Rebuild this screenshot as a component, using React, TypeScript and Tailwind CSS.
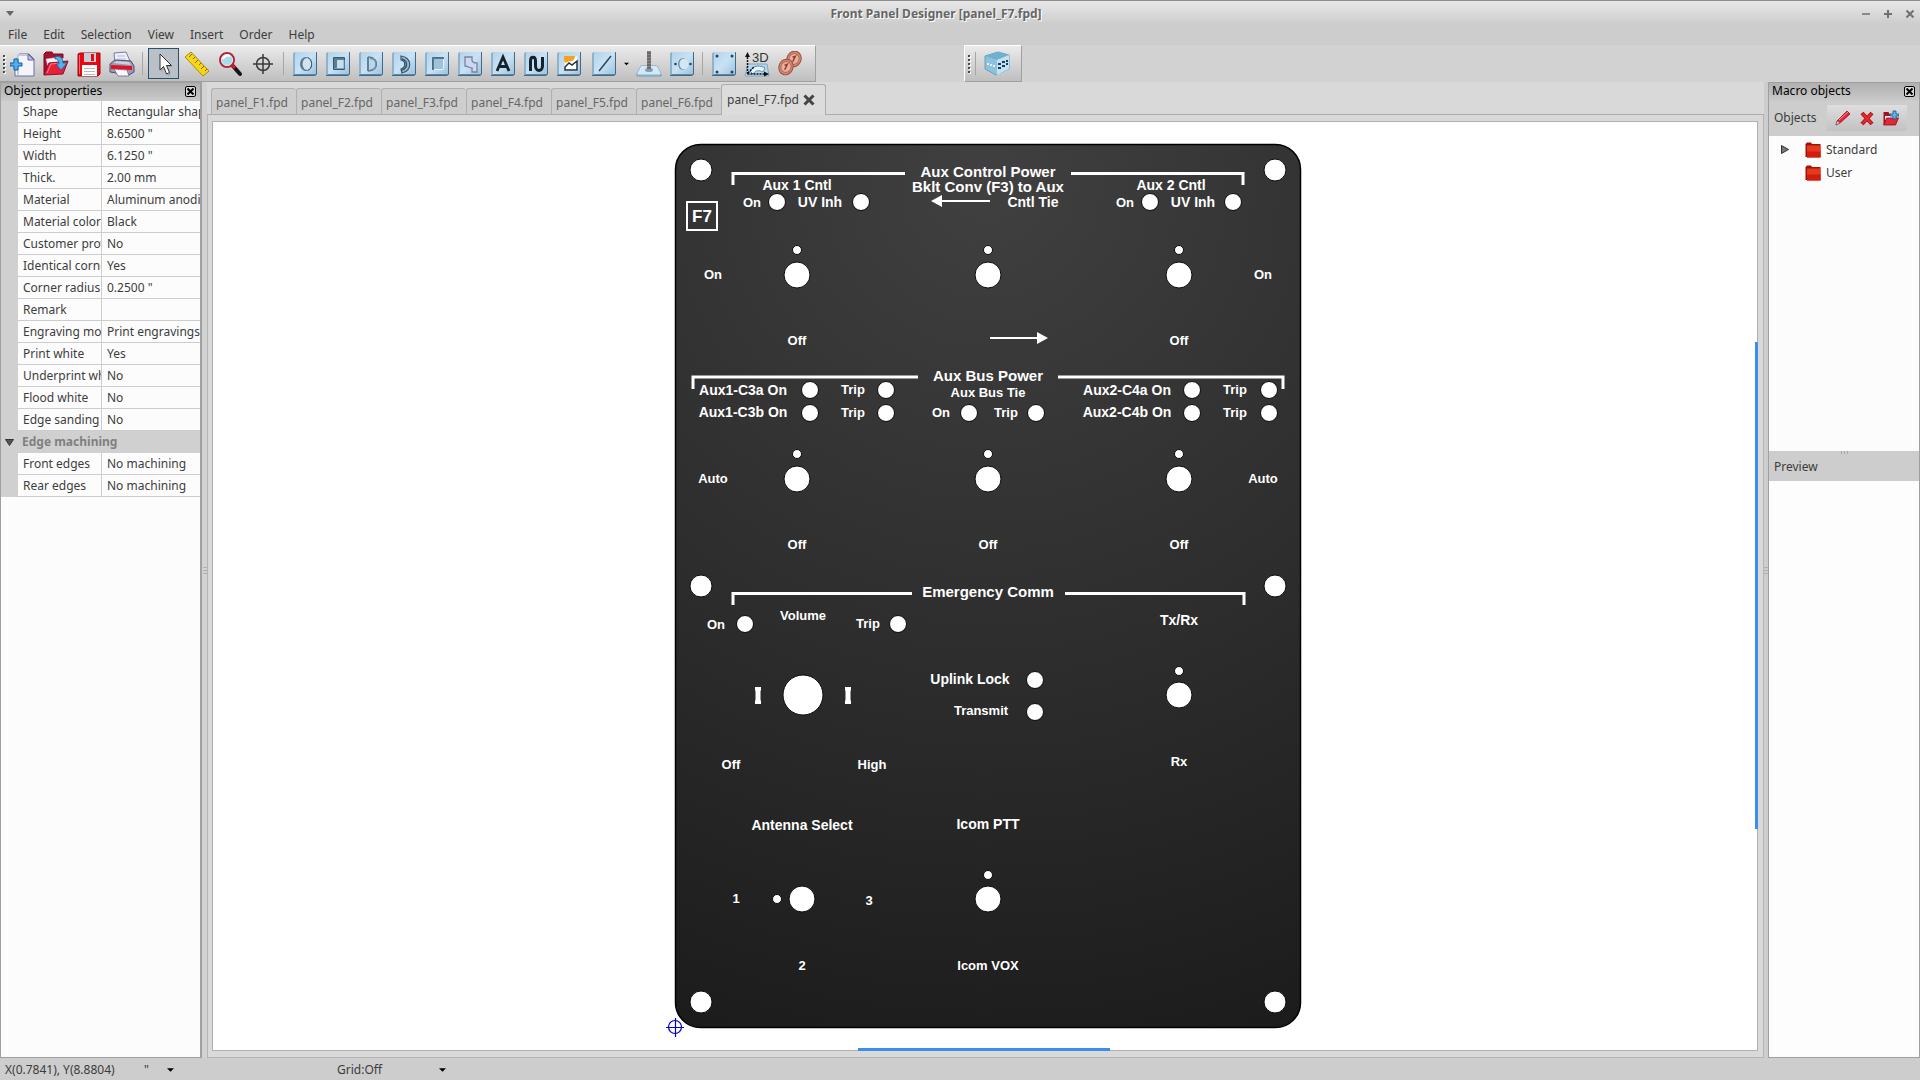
import type { ReactNode } from "react";

type Pt = [number, number];

/* ---------- toolbar icons ---------- */

const Ico = ({ children }: { children: ReactNode }) => (
  <svg viewBox="0 0 26 26" className="size-[26px] shrink-0" aria-hidden="true">
    {children}
  </svg>
);

const Plate = ({ children }: { children?: ReactNode }) => (
  <Ico>
    <defs>
      <linearGradient id="plate" x1="0" y1="0" x2="1" y2="1">
        <stop offset="0" stopColor="#b4d2e8" />
        <stop offset="0.5" stopColor="#c9e2f5" />
        <stop offset="1" stopColor="#9dc3de" />
      </linearGradient>
    </defs>
    <path d="M3 1h22v22l-2 2H1V3z" fill="#5f87a3" />
    <path d="M3 1h21v22H3z" fill="url(#plate)" />
    <path d="M1 3l2-2v22l-2 2z" fill="#8db2cc" />
    <path d="M1 24.5h22l1.500-1.500V1.500" fill="none" stroke="#3f6a88" />
    {children}
  </Ico>
);

const NewIcon = () => (
  <Ico>
    <path d="M9 3h10l5 5v17H5V12z" fill="#f4f5fc" stroke="#6c6ca0" />
    <path d="M8 24V4h10" fill="none" stroke="#c5c8e2" strokeWidth="2" />
    <path d="M18 3v6h6z" fill="#b9bce0" stroke="#6c6ca0" />
    <path d="M4 8h4v4h4v3H8v4H4v-4H0v-3h4z" fill="#49b2f2" stroke="#1b5c95" />
  </Ico>
);
const OpenIcon = () => (
  <Ico>
    <path d="M1 24V3l2-2h6l1 2h10v4" fill="#a90f2e" stroke="#7a0a20" />
    <path d="M3 8l14-2 3 5-14 9z" fill="#f3f3f7" stroke="#b7b7c6" strokeWidth="0.600" />
    <path d="M1 24L6 12l19-2-5 13z" fill="#e8203a" stroke="#8e0f22" />
    <path d="M4 22l4-9 10-1" fill="none" stroke="#ff8090" />
    <path d="M12 6c5-2 8 1 8 6h4l-6 7-5-6h3c0-3-1-5-4-5z" fill="#4db4f0" stroke="#1c5d91" strokeWidth="0.800" />
  </Ico>
);
const SaveIcon = () => (
  <Ico>
    <path d="M2 3l2-1h20v21l-2 2H2z" fill="#e50914" stroke="#a10810" />
    <path d="M8 2h12v9H8z" fill="#c9ced6" />
    <path d="M15 3h3v7h-3z" fill="#e50914" />
    <path d="M6 14h15v11H6z" fill="#fff" />
    <path d="M8 17.500h11M8 20.500h11M8 23.500h11" stroke="#b5b5bd" />
    <path d="M3.500 4v19" stroke="#ff6a70" />
  </Ico>
);
const PrintIcon = () => (
  <Ico>
    <path d="M6 12L5 2l12-1 4 9z" fill="#eef0fb" stroke="#7a7a9c" />
    <path d="M8 5h8M8 8h9" stroke="#b6b9d8" />
    <path d="M1 13l5-4 16 1 3 5v6l-5 3-19-3z" fill="#9a9ab8" stroke="#4d4d6c" />
    <path d="M2 14l21 1v4l-21-1z" fill="#e2121f" />
    <path d="M4 12l4-2 12 1 2 3z" fill="#cfd0e4" />
    <path d="M5 18l13 1 2 6H9z" fill="#f7f7fc" stroke="#6b6b8d" strokeWidth="0.800" />
  </Ico>
);
const CursorIcon = () => (
  <Ico>
    <path d="M10 4v17l4-4 3 8 3-1-3-8h5z" fill="#8b9199" opacity="0.500" />
    <path d="M9 3v16l3.500-3.500 3 7.500 3-1.500-3-7h5z" fill="#fff" stroke="#333" />
  </Ico>
);
const RulerIcon = () => (
  <Ico>
    <path d="M1 6l6-5 18 19-6 5z" fill="#f8d614" stroke="#a98c10" />
    <path d="M8 3l-3 3M11 6l-2 2M14 9l-3 3M17 12l-2 2M20 15l-3 3M23 18l-2 2" stroke="#7c660b" />
  </Ico>
);
const ZoomIcon = () => (
  <Ico>
    <path d="M16 15l7 8" stroke="#161616" strokeWidth="4" strokeLinecap="round" />
    <path d="M15 14l3 3" stroke="#d21f2d" strokeWidth="3" />
    <circle cx="10" cy="9" r="7" fill="#a9dcea" stroke="#b52336" strokeWidth="2" />
    <circle cx="10" cy="9" r="5.500" fill="none" stroke="#e6e6ee" />
    <path d="M6 8c1-3 4-4 7-3" fill="none" stroke="#fff" strokeWidth="2" />
  </Ico>
);
const CrossIcon = () => (
  <Ico>
    <path d="M13 3v20M3 13h20" stroke="#3a3a3a" strokeWidth="1.500" />
    <circle cx="13" cy="13" r="6.500" fill="none" stroke="#3a3a3a" strokeWidth="1.500" />
  </Ico>
);
const HoleIcon = () => (
  <Plate>
    <ellipse cx="14" cy="13" rx="6" ry="7" fill="#56788e" />
    <ellipse cx="15" cy="13" rx="4.500" ry="6" fill="#cfe3f2" />
    <path d="M16 6.500a6 7 0 0 1 0 13" fill="none" stroke="#34586f" />
  </Plate>
);
const RectHoleIcon = () => (
  <Plate>
    <path d="M8.500 6.500h11v12h-11z" fill="#c6dff0" stroke="#34586f" />
    <path d="M9 7h10v2h-7v9H9z" fill="#5b7d93" />
    <path d="M9.500 17.500h9.500V9" fill="none" stroke="#7fa2b9" />
  </Plate>
);
const DHoleIcon = () => (
  <Plate>
    <path d="M10 6c6 0 8.500 3 8.500 7s-2.500 7-8.500 7z" fill="#bdd6e7" stroke="#34586f" />
    <path d="M12 7.500c4 0 6 2 6 5.500s-2 6-6 6" fill="none" stroke="#6e90a6" strokeWidth="1.500" />
    <path d="M10 6v14" stroke="#56788e" strokeWidth="1.500" />
  </Plate>
);
const ArcIcon = () => (
  <Plate>
    <path d="M10 5c11 1 12 15 1 17l-1-4c5-2 5-8 0-9z" fill="#9bb8ca" stroke="#34586f" strokeWidth="1.200" />
    <path d="M11 8c6 2 6 9 0 11" fill="none" stroke="#34586f" strokeWidth="1.500" />
  </Plate>
);
const PocketIcon = () => (
  <Plate>
    <path d="M8.500 6.500h11v12h-11z" fill="#9fc2da" stroke="#456c86" />
    <path d="M9.500 18V7.500H19" fill="none" stroke="#5b7d93" />
    <path d="M10 18.500h9.500V8" fill="none" stroke="#e4f1fa" />
  </Plate>
);
const ShapeIcon = () => (
  <Plate>
    <path d="M8 6h7v3c0 2 2 3 5 3v9h-5v-4c-3 0-4-2-7-2z" fill="#cbd9ec" stroke="#7d7fa5" strokeWidth="1.300" />
  </Plate>
);
const TextIcon = () => (
  <Plate>
    <path d="M7 20l6-14 6 14M9.500 15.500h7.500" fill="none" stroke="#14222d" strokeWidth="2.800" />
  </Plate>
);
const CurveIcon = () => (
  <Plate>
    <path d="M7.500 20V10c0-5 5-5 5 0v5c0 6 7 6 7 0V6" fill="none" stroke="#14222d" strokeWidth="3" />
  </Plate>
);
const ImageIcon = () => (
  <Plate>
    <path d="M8 5h14v15H8z" fill="#fff" stroke="#cbd5dd" />
    <path d="M8 5h11c0 4-3 6-6 5l-3 2-2-2z" fill="#f4a321" />
    <path d="M9 19v-3l4-4 3 2 5-4v9z" fill="#fff" stroke="#1c3348" strokeWidth="1.500" />
  </Plate>
);
const LineIcon = () => (
  <Plate>
    <path d="M8 20L20 5" stroke="#2c4759" strokeWidth="1.500" />
  </Plate>
);
const StudIcon = () => (
  <Ico>
    <path d="M5 15h16l4 8v2H1v-2z" fill="#a9cbe2" stroke="#6e97b4" />
    <path d="M5 15h16l4 8H1z" fill="#d2e8f8" />
    <ellipse cx="13" cy="19" rx="4" ry="2" fill="#7fa0b5" />
    <path d="M11 0h4v18h-4z" fill="#8a8583" />
    <path d="M11 2h4M11 5h4M11 8h4M11 11h4M11 14h4M11 17h4" stroke="#55504e" />
  </Ico>
);
const ConnectorIcon = () => (
  <Plate>
    <ellipse cx="14" cy="13" rx="5" ry="6" fill="#6f90a6" />
    <ellipse cx="15" cy="13" rx="4.500" ry="5.500" fill="#d3e6f4" />
    <circle cx="6.500" cy="13" r="1.300" fill="#2b4353" />
    <circle cx="21.500" cy="13" r="1.300" fill="#2b4353" />
  </Plate>
);
const PanelIcon = () => (
  <Plate>
    {([[6, 5], [21, 5], [6, 21], [21, 21]] as Pt[]).map(([x, y]) => (
      <circle key={`${x}-${y}`} cx={x} cy={y} r="1.500" fill="#2b4353" />
    ))}
  </Plate>
);
const ThreeDIcon = () => (
  <Ico>
    <path d="M4 13h19l2 12H1z" fill="#b7d6ec" stroke="#7fa9c6" />
    <path d="M6 20c3-6 11-6 15-3l-2 4c-4-2-7-2-10 2z" fill="#e8f4fc" stroke="#5f8ba8" />
    <path d="M3.500 23V5M3.500 23H21M4 22l6-6" fill="none" stroke="#111" strokeWidth="1.500" strokeDasharray="2 1" />
    <path d="M3.500 1L1 6h5zM25 23l-5-2.500v5z" fill="#111" />
    <text x="8" y="11" fontSize="13" fill="#333" fontFamily="Liberation Sans, Arial, sans-serif">3D</text>
  </Ico>
);
const CoinIcon = () => (
  <Ico>
    {([[17, 8], [9, 16]] as Pt[]).map(([x, y]) => (
      <g key={x} transform={`rotate(25 ${x} ${y})`}>
        <ellipse cx={x} cy={y} rx="7" ry="8" fill="#d58a74" stroke="#97503f" />
        <ellipse cx={x} cy={y} rx="5" ry="5.500" fill="#eab09c" stroke="#b46b58" />
        <path d={`M${x - 2} ${y - 1}l2-2v6`} fill="none" stroke="#8c4032" strokeWidth="1.500" />
      </g>
    ))}
  </Ico>
);
const BoxIcon = () => (
  <Ico>
    <path d="M1 5l13-4 11 3v14l-13 6L1 18z" fill="#8fc0dc" stroke="#6a9fbd" />
    <path d="M1 5l13-4 11 3-12 5z" fill="#6fb0d0" />
    <path d="M13 9l12-5v14l-12 6z" fill="#c3e1f1" />
    <path d="M14 12h3v2h-3zM18 10h3v2h-3zM22 9h2v2h-2zM14 16h3v2h-3zM18 14h3v2h-3zM22 12h2v2h-2z" fill="#1f3f57" />
    <path d="M4 12v2M7 13v2M10 14v2" stroke="#fff" strokeWidth="1.500" />
  </Ico>
);

const Folder = () => (
  <svg viewBox="0 0 16 16" className="h-4 w-4" aria-hidden="true">
    <path d="M0.500 15V2l1.500-1.500h4l1 1.500h8.500V15z" fill="#a31008" />
    <path d="M2 3.500h13.500v12H2z" fill="#e33a1c" />
    <path d="M2 9.500h13.500v6H2z" fill="#d31d0c" />
  </svg>
);

/* ---------- small shared pieces ---------- */

const ToolButton = ({ label, active, children }: { label: string; active?: boolean; children: ReactNode }) => (
  <button
    type="button"
    aria-label={label}
    className={
      active
        ? "m-px flex size-[31px] shrink-0 items-center justify-center border border-[#2b4e6b] bg-[#b9c0c7]"
        : "m-px flex size-[31px] shrink-0 items-center justify-center"
    }
  >
    {children}
  </button>
);

const Sep = () => <span className="mx-1 h-[23px] w-px bg-[#a6a6a6]" />;
const Grip = () => (
  <span className="flex w-1.5 flex-col items-center gap-0.5 pl-0.5">
    {[0, 1, 2, 3, 4].map((i) => (
      <span key={i} className="size-0.5 bg-[#4a4a4a] shadow-[1px_1px_0_#fff]" />
    ))}
  </span>
);

const CloseBox = ({ label }: { label: string }) => (
  <button type="button" aria-label={label} className="flex size-[11px] items-center justify-center rounded-[2px] border border-black bg-[#d8d8d8]">
    <svg viewBox="0 0 7 7" className="size-[7px]" aria-hidden="true">
      <path d="M0.500 0.500l6 6M6.500 0.500l-6 6" stroke="#000" strokeWidth="2" />
    </svg>
  </button>
);

const DockTitle = ({ children }: { children: string }) => (
  <div className="flex h-[18px] shrink-0 items-center justify-between bg-linear-to-b from-[#b0b0b0] to-[#cacaca] pb-0.5 pl-[3px] pr-1 text-black">
    <h2>{children}</h2>
    <CloseBox label={`Close ${children}`} />
  </div>
);

const Caret = () => (
  <svg viewBox="0 0 8 4" className="h-1 w-[7px]" aria-hidden="true">
    <path d="M0 0h8L4 4z" fill="#000" />
  </svg>
);

/* ---------- data ---------- */

const menus = ["File", "Edit", "Selection", "View", "Insert", "Order", "Help"];
const tabs = ["panel_F1.fpd", "panel_F2.fpd", "panel_F3.fpd", "panel_F4.fpd", "panel_F5.fpd", "panel_F6.fpd"];

const properties: [string, string][] = [
  ["Shape", "Rectangular shape"],
  ["Height", '8.6500 "'],
  ["Width", '6.1250 "'],
  ["Thick.", "2.00 mm"],
  ["Material", "Aluminum anodized"],
  ["Material color", "Black"],
  ["Customer provided", "No"],
  ["Identical corners", "Yes"],
  ["Corner radius", '0.2500 "'],
  ["Remark", ""],
  ["Engraving mode", "Print engravings"],
  ["Print white", "Yes"],
  ["Underprint white", "No"],
  ["Flood white", "No"],
  ["Edge sanding", "No"],
];
const edges: [string, string][] = [
  ["Front edges", "No machining"],
  ["Rear edges", "No machining"],
];

/* ---------- front panel drawing ---------- */

const mountHoles: Pt[] = [[26, 26], [600, 26], [26, 442], [600, 442], [26, 858], [600, 858]];
const ledHoles: Pt[] = [
  [102, 58], [186, 58], [475, 58], [558, 58],
  [135, 246], [211, 246], [517, 246], [594, 246],
  [135, 269], [211, 269], [294, 269], [361, 269], [517, 269], [594, 269],
  [70, 480], [223, 480], [360, 536], [360, 568],
];
const switchHoles: Pt[] = [
  [122, 131], [313, 131], [504, 131],
  [122, 335], [313, 335], [504, 335],
  [504, 551], [127, 755], [313, 755],
];
const pinHoles: Pt[] = [
  [122, 106], [313, 106], [504, 106],
  [122, 310], [313, 310], [504, 310],
  [504, 527], [102, 755], [313, 731],
];
const headings: [string, number, number][] = [
  ["Aux Control Power", 313, 33],
  ["Bklt Conv (F3) to Aux", 313, 48],
  ["Aux Bus Power", 313, 237],
  ["Emergency Comm", 313, 453],
];
const wideLabels: [string, number, number][] = [
  ["Aux 1 Cntl", 122, 46], ["Aux 2 Cntl", 496, 46],
  ["UV Inh", 145, 63], ["Cntl Tie", 358, 63], ["UV Inh", 518, 63],
  ["Aux1-C3a On", 68, 251], ["Aux1-C3b On", 68, 273],
  ["Aux2-C4a On", 452, 251], ["Aux2-C4b On", 452, 273],
  ["Tx/Rx", 504, 481], ["Uplink Lock", 295, 540],
  ["Antenna Select", 127, 686], ["Icom PTT", 313, 685],
];
const labels: [string, number, number][] = [
  ["On", 77, 63], ["On", 450, 63],
  ["On", 38, 135], ["On", 588, 135], ["Off", 122, 201], ["Off", 504, 201],
  ["Trip", 178, 250], ["Trip", 178, 273], ["Aux Bus Tie", 313, 253], ["On", 266, 273], ["Trip", 331, 273],
  ["Trip", 560, 250], ["Trip", 560, 273],
  ["Auto", 38, 339], ["Auto", 588, 339], ["Off", 122, 405], ["Off", 313, 405], ["Off", 504, 405],
  ["On", 41, 485], ["Volume", 128, 476], ["Trip", 193, 484], ["Transmit", 306, 571],
  ["Off", 56, 625], ["High", 197, 625], ["Rx", 504, 622],
  ["1", 61, 759], ["3", 194, 761], ["2", 127, 826], ["Icom VOX", 313, 826],
];

const Holes = ({ at, r }: { at: Pt[]; r: number }) => (
  <g fill="#fff" stroke="#0a0a0a">
    {at.map(([x, y]) => (
      <circle key={`${x}-${y}`} cx={x} cy={y} r={r} />
    ))}
  </g>
);
const Words = ({ items, size }: { items: [string, number, number][]; size: number }) => (
  <g fontSize={size}>
    {items.map(([t, x, y]) => (
      <text key={`${t}-${x}-${y}`} x={x} y={y}>{t}</text>
    ))}
  </g>
);

const FrontPanel = () => (
  <svg viewBox="-20 -22 660 928" className="h-full w-full" role="img" aria-label="Front panel F7">
    <defs>
      <radialGradient id="anodized" gradientUnits="userSpaceOnUse" cx="313" cy="40" r="960">
        <stop offset="0" stopColor="#404040" />
        <stop offset="0.500" stopColor="#2d2d2d" />
        <stop offset="1" stopColor="#191919" />
      </radialGradient>
    </defs>
    <rect x="0.500" y="0.500" width="625" height="883" rx="25" fill="url(#anodized)" stroke="#000" strokeWidth="1.500" />
    <Holes at={mountHoles} r={11} />
    <Holes at={ledHoles} r={8.5} />
    <Holes at={switchHoles} r={13} />
    <Holes at={pinHoles} r={4.5} />
    <Holes at={[[128, 551]]} r={20} />
    <g fill="#fff">
      <path d="M80 543h6v3l-0.500 1v9l0.500 1v3h-6v-3l0.500-1v-9l-0.500-1zM170 543h6v3l-0.500 1v9l0.500 1v3h-6v-3l0.500-1v-9l-0.500-1z" />
      <path d="M256 57l11-6v12zM373 194l-11-6v12z" />
    </g>
    <g fill="none" stroke="#fff">
      <path d="M58 41V29.500H230M396 29.500H568V41" strokeWidth="3" />
      <path d="M18 245V233H243M383 233H608V245" strokeWidth="3" />
      <path d="M58 461V449.500H237M390 449.500H569V461" strokeWidth="3" />
      <path d="M266 57H315M315 194H363" strokeWidth="2" />
      <rect x="12" y="58" width="30" height="28" strokeWidth="2" />
    </g>
    <g fill="#fff" fontWeight="700" textAnchor="middle" fontFamily="Liberation Sans, Arial, sans-serif">
      <Words items={[["F7", 27, 78]]} size={17} />
      <Words items={headings} size={15} />
      <Words items={wideLabels} size={14} />
      <Words items={labels} size={13} />
    </g>
    <g fill="none" stroke="#0000c8" strokeWidth="1.200">
      <circle cx="0" cy="883" r="6.500" />
      <path d="M-9 883.500H9M0.500 874V893" />
    </g>
  </svg>
);

/* ---------- page ---------- */

const PropertyRow = ({ name, value }: { name: string; value: string }) => (
  <tr className="h-[22px]">
    <td className="bg-[#d0d0d0] p-0" />
    <th scope="row" className="overflow-hidden border-b border-r border-[#cdcdcd] bg-[#fcfcfc] p-0 pl-[5px] text-left font-normal">{name}</th>
    <td className="overflow-hidden border-b border-[#cdcdcd] bg-[#fcfcfc] p-0 pl-[5px]">{value}</td>
  </tr>
);

export default function App() {
  return (
    <div className="flex h-screen flex-col overflow-hidden bg-[#cdcdcd] font-['Noto_Sans','Open_Sans',sans-serif] text-[12px] leading-4 text-[#3c3c3c]">
      <header className="flex h-6 shrink-0 items-center border-t border-[#8c8c8c] bg-linear-to-b from-[#e8e8e8] to-[#cdcdcd] px-1.5 pt-0.5">
        <button type="button" aria-label="Window menu" className="w-4">
          <svg viewBox="0 0 8 5" className="h-[5px] w-2" aria-hidden="true"><path d="M0 0h8L4 5z" fill="#666" /></svg>
        </button>
        <h1 className="flex-1 text-center font-bold text-[#666] [text-shadow:1px_1px_0_#fff]">Front Panel Designer [panel_F7.fpd]</h1>
        <div className="flex w-16 justify-end gap-3.5 text-[#666]">
          <button type="button" aria-label="Minimize">
            <svg viewBox="0 0 8 8" className="size-2" aria-hidden="true"><path d="M0 4h8" stroke="#707070" strokeWidth="1.500" /></svg>
          </button>
          <button type="button" aria-label="Maximize">
            <svg viewBox="0 0 8 8" className="size-2" aria-hidden="true"><path d="M0 4h8M4 0v8" stroke="#707070" strokeWidth="2" /></svg>
          </button>
          <button type="button" aria-label="Close">
            <svg viewBox="0 0 8 8" className="size-2" aria-hidden="true"><path d="M0.500 0.500l7 7M7.500 0.500l-7 7" stroke="#707070" strokeWidth="2" /></svg>
          </button>
        </div>
      </header>

      <nav className="flex h-[21px] shrink-0 items-center gap-4 px-2">
        {menus.map((m) => (
          <button key={m} type="button">{m}</button>
        ))}
      </nav>

      <div className="flex h-[37px] shrink-0 bg-[#d2d2d2]">
        <div className="flex w-[816px] items-center border-b border-r border-t border-b-[#a0a0a0] border-r-[#a0a0a0] border-t-white bg-linear-to-b from-[#ebebeb] to-[#bfbfbf]">
          <Grip />
          <ToolButton label="New"><NewIcon /></ToolButton>
          <ToolButton label="Open"><OpenIcon /></ToolButton>
          <ToolButton label="Save"><SaveIcon /></ToolButton>
          <ToolButton label="Print"><PrintIcon /></ToolButton>
          <Sep />
          <ToolButton label="Select" active><CursorIcon /></ToolButton>
          <ToolButton label="Measure"><RulerIcon /></ToolButton>
          <ToolButton label="Zoom"><ZoomIcon /></ToolButton>
          <ToolButton label="Set origin"><CrossIcon /></ToolButton>
          <Sep />
          <ToolButton label="Drill hole"><HoleIcon /></ToolButton>
          <ToolButton label="Rectangular hole"><RectHoleIcon /></ToolButton>
          <ToolButton label="D-hole"><DHoleIcon /></ToolButton>
          <ToolButton label="Curved slot"><ArcIcon /></ToolButton>
          <ToolButton label="Cavity"><PocketIcon /></ToolButton>
          <ToolButton label="Free contour"><ShapeIcon /></ToolButton>
          <ToolButton label="Text"><TextIcon /></ToolButton>
          <ToolButton label="Engraving"><CurveIcon /></ToolButton>
          <ToolButton label="Image"><ImageIcon /></ToolButton>
          <span className="w-0.5" />
          <ToolButton label="Line"><LineIcon /></ToolButton>
          <button type="button" aria-label="Line options" className="flex w-3 items-center justify-center"><span className="flex w-[5px]"><Caret /></span></button>
          <ToolButton label="Stud"><StudIcon /></ToolButton>
          <ToolButton label="Macro"><ConnectorIcon /></ToolButton>
          <Sep />
          <ToolButton label="Panel properties"><PanelIcon /></ToolButton>
          <ToolButton label="3D view"><ThreeDIcon /></ToolButton>
          <ToolButton label="Price"><CoinIcon /></ToolButton>
        </div>
        <div className="ml-[148px] flex w-[58px] items-center border-b border-l border-r border-t border-b-[#a0a0a0] border-l-white border-r-[#a0a0a0] border-t-white bg-linear-to-b from-[#ebebeb] to-[#bfbfbf]">
          <Grip />
          <Sep />
          <ToolButton label="Housing"><BoxIcon /></ToolButton>
        </div>
      </div>

      <main className="flex min-h-0 flex-1">
        <aside className="flex w-[202px] shrink-0 flex-col border-2 border-b border-l border-t border-[#a0a0a0] bg-[#fcfcfc]">
          <DockTitle>Object properties</DockTitle>
          <table className="w-full table-fixed border-separate border-spacing-0 whitespace-nowrap">
            <colgroup>
              <col className="w-[17px]" />
              <col className="w-[84px]" />
              <col />
            </colgroup>
            <tbody>
              {properties.map(([n, v]) => <PropertyRow key={n} name={n} value={v} />)}
              <tr className="h-[22px] bg-[#d0d0d0] text-[#808080]">
                <td className="p-0">
                  <button type="button" aria-label="Collapse Edge machining" className="block pl-1">
                    <svg viewBox="0 0 9 7" className="h-[7px] w-[9px]" aria-hidden="true"><path d="M0.500 0.500h8L4.500 6.500z" fill="#555" stroke="#333" /></svg>
                  </button>
                </td>
                <th colSpan={2} scope="colgroup" className="p-0 pl-1 text-left font-bold">Edge machining</th>
              </tr>
              {edges.map(([n, v]) => <PropertyRow key={n} name={n} value={v} />)}
            </tbody>
          </table>
        </aside>

        <div className="flex w-[5px] shrink-0 flex-col items-center justify-center gap-0.5 bg-[#d2d2d2]">
          {[0, 1, 2].map((i) => <span key={i} className="h-px w-1 bg-[#b0b0b0]" />)}
        </div>

        <section className="flex min-w-0 flex-1 flex-col bg-[#d9d9d9]">
          <div role="tablist" className="flex h-[33px] shrink-0 items-end border-b border-[#acacac] pl-1">
            {tabs.map((t) => (
              <button key={t} type="button" role="tab" aria-selected="false" className="h-[26px] w-[85px] shrink-0 rounded-t-[3px] border-l border-t border-[#b0b0b0] bg-[#cecece] pr-1 pt-0.5 text-center text-[#666]">
                {t}
              </button>
            ))}
            <div className="-mb-px flex h-[31px] w-[105px] shrink-0 items-center justify-between rounded-t-[3px] border-l border-r border-t border-[#acacac] bg-[#dcdcdc] pl-[5px] pr-2.5">
              <button type="button" role="tab" aria-selected="true">panel_F7.fpd</button>
              <button type="button" aria-label="Close tab">
                <svg viewBox="0 0 12 12" className="size-3" aria-hidden="true"><path d="M1.500 1.500l9 9M10.500 1.500l-9 9" stroke="#444" strokeWidth="3" /></svg>
              </button>
            </div>
          </div>
          <div className="min-h-0 flex-1 border-b border-l border-r border-[#b5b5b5] pb-1.5 pl-1 pr-[5px] pt-1.5">
            <div className="relative h-full border border-[#b0b0b0] bg-white">
              <FrontPanel />
              <span className="absolute -bottom-px left-[41.8%] h-[3px] w-[252px] bg-[#3b8eea]" />
              <span className="absolute -right-px top-[220px] h-[487px] w-[3px] bg-[#3b8eea]" />
            </div>
          </div>
        </section>

        <div className="flex w-1 shrink-0 flex-col items-center justify-center gap-0.5 bg-[#cdcdcd]">
          {[0, 1, 2].map((i) => <span key={i} className="h-px w-1 bg-[#b0b0b0]" />)}
        </div>

        <aside className="flex w-[152px] shrink-0 flex-col border border-[#a0a0a0] bg-[#cdcdcd]">
          <DockTitle>Macro objects</DockTitle>
          <div className="flex h-[35px] shrink-0 items-center pb-0.5 pl-[5px]">
            <span className="w-[53px]">Objects</span>
            <div className="flex h-[26px] w-20 items-center justify-between bg-linear-to-b from-[#dedede] to-[#c2c2c2] px-2">
              <button type="button" aria-label="Edit">
                <svg viewBox="0 0 16 16" className="size-4" aria-hidden="true">
                  <path d="M1 15l1-4 10-10 3 3L5 13z" fill="#e8203a" stroke="#9d1020" strokeWidth="0.800" />
                  <path d="M1 15l1-4 3 2z" fill="#e8d0b0" stroke="#666" strokeWidth="0.600" />
                  <path d="M4 10l9-8" stroke="#ff8a98" />
                </svg>
              </button>
              <button type="button" aria-label="Delete">
                <svg viewBox="0 0 16 16" className="size-4" aria-hidden="true">
                  <path d="M3 3l10 11M13 3L3 14" stroke="#a50d12" strokeWidth="4" />
                  <path d="M3.500 3.500l9 10M12.500 3.500l-9 10" stroke="#e6282c" strokeWidth="2.500" />
                </svg>
              </button>
              <button type="button" aria-label="Add folder">
                <svg viewBox="0 0 16 16" className="size-4" aria-hidden="true">
                  <path d="M0.500 14V2h5l1 2h6v3" fill="#a31020" />
                  <path d="M2 6h10v4H2z" fill="#f1f1f5" />
                  <path d="M0.500 15l3-7h12l-3 7z" fill="#e02836" stroke="#8e0f1c" strokeWidth="0.800" />
                  <path d="M10 1h3v3h3v2h-3v3h-3V6H7V4h3z" fill="#5cb8ec" stroke="#15548a" strokeWidth="0.800" />
                </svg>
              </button>
            </div>
          </div>
          <ul className="h-[315px] shrink-0 bg-[#fcfcfc] pt-0.5">
            <li className="flex h-[23px] items-center pl-3">
              <button type="button" aria-label="Expand Standard" className="w-6">
                <svg viewBox="0 0 8 9" className="h-[9px] w-2" aria-hidden="true"><path d="M0.500 0.500v8l7-4z" fill="#777" stroke="#333" /></svg>
              </button>
              <Folder />
              <span className="pl-[5px]">Standard</span>
            </li>
            <li className="flex h-[23px] items-center pl-9">
              <Folder />
              <span className="pl-[5px]">User</span>
            </li>
          </ul>
          <div className="flex h-[30px] shrink-0 flex-col">
            <span className="flex h-[3px] justify-center gap-0.5">
              {[0, 1, 2].map((i) => <span key={i} className="h-[3px] w-px bg-[#a8a8a8]" />)}
            </span>
            <h2 className="pl-[5px] pt-[5px]">Preview</h2>
          </div>
          <div className="flex-1 bg-[#fdfdfd]" />
        </aside>
      </main>

      <footer className="flex h-[22px] shrink-0 items-center pl-[5px] pt-px">
        <span className="w-[139px]">X(0.7841), Y(8.8804)</span>
        <button type="button" className="flex w-[193px] items-center gap-[18px]">
          <span>"</span>
          <Caret />
        </button>
        <button type="button" className="flex w-[109px] items-center justify-between">
          <span>Grid:Off</span>
          <Caret />
        </button>
      </footer>
    </div>
  );
}
